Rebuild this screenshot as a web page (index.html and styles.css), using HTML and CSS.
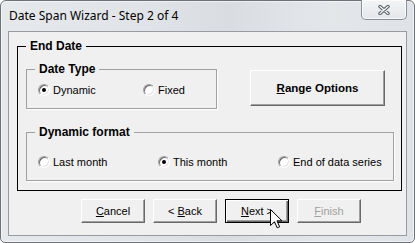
FILE: index.html
```html
<!DOCTYPE html>
<html lang="en">

<head>
    <title>Date Span Wizard</title>
    <meta name="viewport" content="width=device-width, initial-scale=1" />
    <link rel="stylesheet" href="styles.css">
</head>

<body>
    <div class="window">
        <div class="titlebar">
            <span class="title">Date Span Wizard - Step 2 of 4</span>
            <button class="close" aria-label="Close">
                <svg width="12" height="10" viewBox="0 0 12 10">
                    <path d="M2 1.5 L10 8.5 M10 1.5 L2 8.5" stroke="#535a62" stroke-width="3.4" stroke-linecap="round" fill="none" />
                    <path d="M2 1.5 L10 8.5 M10 1.5 L2 8.5" stroke="#f4f6f8" stroke-width="1.4" stroke-linecap="round" fill="none" />
                </svg>
            </button>
        </div>
        <div class="client">
            <fieldset class="group group-main">
                <legend>End Date</legend>
                <div class="row">
                    <fieldset class="group group-type">
                        <legend>Date Type</legend>
                        <div class="options options-type">
                            <label class="option"><span class="radio checked"></span>Dynamic</label>
                            <label class="option"><span class="radio"></span>Fixed</label>
                        </div>
                    </fieldset>
                    <button class="btn btn-range"><u>R</u>ange Options</button>
                </div>
                <fieldset class="group group-format">
                    <legend>Dynamic format</legend>
                    <div class="options options-format">
                        <label class="option"><span class="radio"></span>Last month</label>
                        <label class="option"><span class="radio checked"></span>This month</label>
                        <label class="option"><span class="radio"></span>End of data series</label>
                    </div>
                </fieldset>
            </fieldset>
            <div class="actions">
                <button class="btn"><u>C</u>ancel</button>
                <button class="btn">&lt; <u>B</u>ack</button>
                <button class="btn btn-default"><u>N</u>ext &gt;</button>
                <button class="btn" disabled><u>F</u>inish</button>
            </div>
        </div>
    </div>

    <svg class="cursor" width="13" height="20" viewBox="0 0 13 20">
        <path d="M0.5 0.5 L0.5 16.5 L4.5 12.8 L7.2 18.8 L9.6 17.8 L7 11.8 L12 11.8 Z" fill="#fff" stroke="#000" stroke-width="1" stroke-linejoin="miter" />
    </svg>
</body>

</html>
```

FILE: styles.css
```css
body {
    margin: 0;
    font-family: "Liberation Sans", Arial, sans-serif;
    font-size: 11px;
    color: #000;
    background: #fff;
}

.window {
    position: relative;
    width: 415px;
    height: 243px;
    box-sizing: border-box;
    border: 1px solid #6d7278;
    border-radius: 6px 6px 5px 5px;
    padding: 0 7px 6px 7px;
    background: linear-gradient(to right, #e6e9ec 0%, #e0e3e7 35%, #d9dde2 55%, #e4e7ea 80%, #dfe2e6 100%);
    box-shadow: inset 0 0 0 1px rgba(255, 255, 255, 0.55);
}

.titlebar {
    display: flex;
    justify-content: space-between;
    align-items: flex-start;
    height: 30px;
}

.title {
    font-family: "Noto Sans", "Open Sans", sans-serif;
    font-size: 12px;
    line-height: 16px;
    margin: 7px 0 0 1px;
    color: #000;
}

.close {
    width: 46px;
    height: 20px;
    margin-top: -1px;
    padding: 0;
    display: flex;
    align-items: center;
    justify-content: center;
    border: 1px solid #8a9097;
    border-top: none;
    border-radius: 0 0 5px 5px;
    background: linear-gradient(#f3f4f6, #e4e7eb);
    box-shadow: inset 0 0 0 1px rgba(255, 255, 255, 0.7);
}

.client {
    height: 205px;
    box-sizing: border-box;
    border: 1px solid #979ca2;
    background: #f0f0f0;
    padding: 7px 4px 12px 8px;
}

.group {
    margin: 0;
    min-width: 0;
    box-sizing: border-box;
}

.group legend {
    padding: 0 4px;
    font-size: 12px;
    font-weight: bold;
    line-height: 14px;
}

.group-main {
    width: 385px;
    border: 1px solid #000;
    padding: 9px 7px 9px 8px;
}

.group-type,
.group-format {
    border: 1px solid #a0a0a0;
    box-shadow: 1px 1px 0 #fff;
}

.row {
    display: flex;
    align-items: flex-start;
}

.group-type {
    width: 191px;
    padding: 7px 8px 11px 8px;
}

.group-format {
    width: 368px;
    margin-top: 16px;
    padding: 16px 8px 11px 8px;
}

.options {
    display: grid;
    height: 14px;
    padding-left: 3px;
}

.options-type {
    grid-template-columns: 105px auto;
}

.options-format {
    grid-template-columns: 120px 120px auto;
}

.option {
    display: flex;
    align-items: center;
    gap: 3px;
    line-height: 14px;
    white-space: nowrap;
}

.radio {
    position: relative;
    width: 12px;
    height: 12px;
    box-sizing: border-box;
    border-radius: 50%;
    border: 1px solid;
    border-color: #a0a0a0 #fff #fff #a0a0a0;
    background: #fff;
    box-shadow: inset 1px 1px 0 #696969, inset -1px -1px 0 #e3e3e3;
}

.radio.checked::after {
    content: "";
    position: absolute;
    left: 3px;
    top: 3px;
    width: 4px;
    height: 4px;
    border-radius: 50%;
    background: #000;
}

.btn {
    width: 64px;
    height: 24px;
    padding: 0;
    font-family: "Liberation Sans", Arial, sans-serif;
    font-size: 11px;
    color: #000;
    background: #f0f0f0;
    border: 1px solid;
    border-color: #fff #696969 #696969 #fff;
    box-shadow: inset -1px -1px 0 #a0a0a0;
}

.btn-range {
    width: 135px;
    height: 36px;
    margin: 8px 0 0 33px;
    font-size: 11.5px;
    font-weight: bold;
}

.btn-default {
    border: 1px solid #000;
    box-shadow: inset 1px 1px 0 #fff, inset -1px -1px 0 #696969, inset -2px -2px 0 #a0a0a0;
}

.btn:disabled {
    color: #a0a0a0;
}

.actions {
    display: flex;
    gap: 8px;
    margin-top: 8px;
    padding-left: 64px;
}

.cursor {
    position: absolute;
    left: 270px;
    top: 209px;
}
```
